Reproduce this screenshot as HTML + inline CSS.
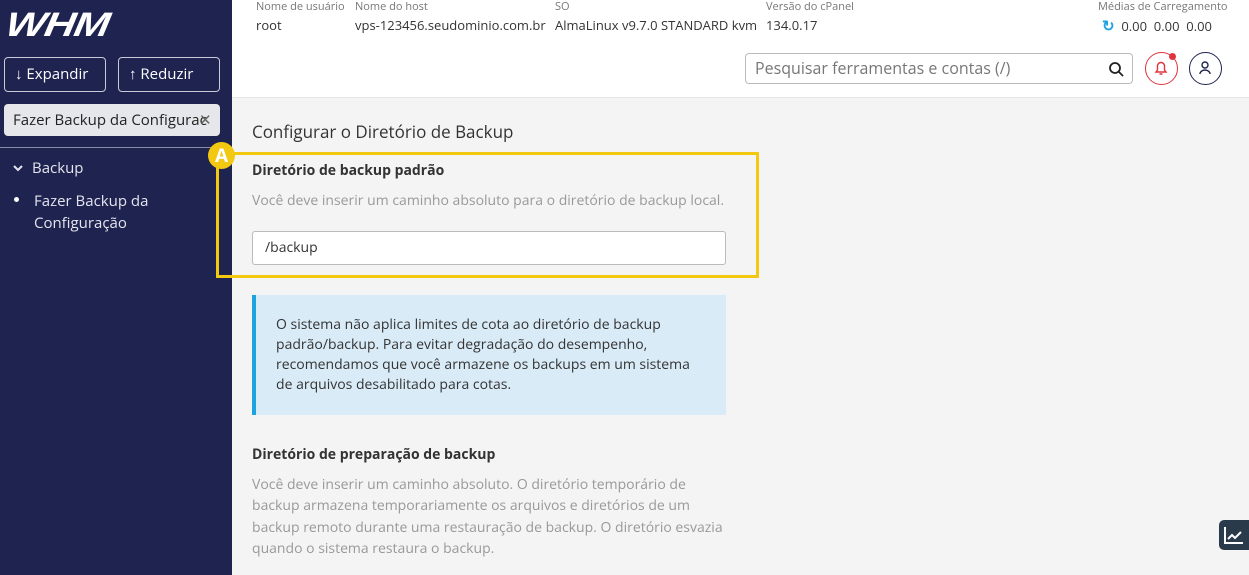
<!DOCTYPE html>
<html><head><meta charset="utf-8"><style>
*{box-sizing:border-box;margin:0;padding:0}
body{width:1249px;height:575px;overflow:hidden;font-family:"Open Sans","Liberation Sans",sans-serif;background:#f4f4f4;position:relative;color:#333}
.sb{position:absolute;left:0;top:0;width:232px;height:575px;background:#1f2350;color:#fff}
.logo{position:absolute;left:6px;top:6px;font:italic 900 34px "Liberation Sans",sans-serif;letter-spacing:-1px;color:#fff;transform:skewX(-10deg) scaleX(1.25);transform-origin:left}
.btn{position:absolute;top:57px;height:35px;border:1px solid #c9cbd6;border-radius:4px;color:#fff;font-size:15px;line-height:33px;padding-left:10px}
.srch{position:absolute;left:4px;top:104px;width:216px;height:32px;background:#e6e7ea;border-radius:4px;color:#222;font-size:15px;line-height:32px;padding-left:9px;white-space:nowrap;overflow:hidden}
.hr{position:absolute;left:0;top:147px;width:232px;height:1px;background:#8a8da8}
.top{position:absolute;left:232px;top:0;right:0;height:98px;background:#fff;border-bottom:1px solid #e6e6e6}
.lbl{position:absolute;top:-1px;font-size:11px;color:#777}
.val{position:absolute;top:16px;font-size:13px;color:#333}
.inp{position:absolute;left:745px;top:53px;width:388px;height:31px;border:1px solid #bbb;border-radius:4px;font-size:16px;color:#777;line-height:29px;padding-left:9px;background:#fff}
.circ{position:absolute;top:52px;width:33px;height:33px;border-radius:50%}
.t{position:absolute;font-size:14px}
</style></head><body>
<div class="sb">
<div class="logo">WHM</div>
<div class="btn" style="left:4px;width:102px">↓ Expandir</div>
<div class="btn" style="left:118px;width:102px">↑ Reduzir</div>
<div class="srch">Fazer Backup da Configurac<span style="position:absolute;left:195px;color:#666">✕</span></div>
<div class="hr"></div>
<div style="position:absolute;left:12px;top:158px;font-size:15px;color:#e4e5ee"><svg width="12" height="10" viewBox="0 0 12 10" style="margin-right:8px"><path d="M2 3l4 4 4-4" fill="none" stroke="#e4e5ee" stroke-width="2"/></svg>Backup</div>
<div style="position:absolute;left:14px;top:197px;width:5px;height:5px;border-radius:50%;background:#fff"></div>
<div style="position:absolute;left:34px;top:190px;font-size:15px;line-height:22px;color:#e4e5ee">Fazer Backup da<br>Configuração</div>
</div>
<div class="top">
<div class="lbl" style="left:24px">Nome de usuário</div><div class="val" style="left:24px">root</div>
<div class="lbl" style="left:123px">Nome do host</div><div class="val" style="left:123px">vps-123456.seudominio.com.br</div>
<div class="lbl" style="left:323px">SO</div><div class="val" style="left:323px">AlmaLinux v9.7.0 STANDARD kvm</div>
<div class="lbl" style="left:534px">Versão do cPanel</div><div class="val" style="left:534px">134.0.17</div>
<div class="lbl" style="left:866px">Médias de Carregamento</div><div class="val" style="left:870px"><span style="color:#1fa3e0;font-weight:bold;font-size:15px">↻</span> &nbsp;0.00&nbsp; 0.00&nbsp; 0.00</div>
</div>
<div class="inp">Pesquisar ferramentas e contas (/)
<svg style="position:absolute;right:8px;top:7px" width="16" height="16" viewBox="0 0 16 16"><circle cx="7" cy="7" r="5" fill="none" stroke="#222" stroke-width="1.8"/><path d="M11 11l4 4" stroke="#222" stroke-width="1.8"/></svg></div>
<div class="circ" style="left:1145px;border:1.5px solid #e0333f"><svg width="30" height="30" viewBox="0 0 30 30"><path d="M10 19h10l-1.5-2v-4a3.5 3.5 0 0 0-7 0v4z M13.5 21h3" fill="none" stroke="#e0333f" stroke-width="1.4"/></svg></div>
<div style="position:absolute;left:1169px;top:53px;width:7px;height:7px;border-radius:50%;background:#e0333f"></div>
<div class="circ" style="left:1189px;border:1.5px solid #1f2350"><svg width="30" height="30" viewBox="0 0 30 30"><circle cx="15" cy="12" r="3" fill="none" stroke="#1f2350" stroke-width="1.4"/><path d="M10 21a5 4 0 0 1 10 0" fill="none" stroke="#1f2350" stroke-width="1.4"/></svg></div>
<div class="t" style="left:252px;top:120px;font-size:17px;color:#333">Configurar o Diretório de Backup</div>
<div style="position:absolute;left:216px;top:152px;width:543px;height:126px;border:3px solid #f2c811"></div>
<div style="position:absolute;left:208px;top:142px;width:27px;height:27px;border-radius:50%;background:#f2c811;color:#fff;font-weight:bold;font-size:19px;text-align:center;line-height:27px">A</div>
<div class="t" style="left:252px;top:161px;font-weight:bold">Diretório de backup padrão</div>
<div class="t" style="left:252px;top:191px;color:#999">Você deve inserir um caminho absoluto para o diretório de backup local.</div>
<div style="position:absolute;left:252px;top:231px;width:474px;height:34px;border:1px solid #bbb;border-radius:3px;background:#fff;font-size:14px;line-height:32px;padding-left:12px">/backup</div>
<div style="position:absolute;left:252px;top:295px;width:474px;height:120px;background:#d9ebf7;border-left:4px solid #1fa3e0;padding:20px 0 0 20px;font-size:14px;line-height:20px;color:#333">O sistema não aplica limites de cota ao diretório de backup<br>padrão/backup. Para evitar degradação do desempenho,<br>recomendamos que você armazene os backups em um sistema<br>de arquivos desabilitado para cotas.</div>
<div class="t" style="left:252px;top:445px;font-weight:bold">Diretório de preparação de backup</div>
<div class="t" style="left:252px;top:474px;color:#999;line-height:21.3px">Você deve inserir um caminho absoluto. O diretório temporário de<br>backup armazena temporariamente os arquivos e diretórios de um<br>backup remoto durante uma restauração de backup. O diretório esvazia<br>quando o sistema restaura o backup.</div>
<div style="position:absolute;left:1219px;top:520px;width:30px;height:30px;background:#293a4a;border-radius:5px 0 0 5px"><svg width="30" height="30" viewBox="0 0 30 30"><path d="M6 7v16h18 M9 19l4-4 3 3 6-6" fill="none" stroke="#fff" stroke-width="2"/></svg></div>
</body></html>
